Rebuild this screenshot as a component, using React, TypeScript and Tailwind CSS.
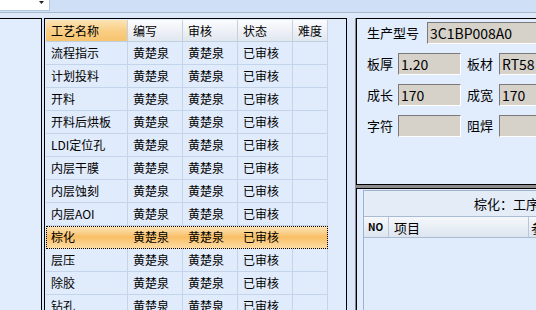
const rows = [
  "流程指示",
  "计划投料",
  "开料",
  "开料后烘板",
  "LDI定位孔",
  "内层干膜",
  "内层蚀刻",
  "内层AOI",
  "棕化",
  "层压",
  "除胶",
  "钻孔",
];

const cols = "grid w-[282px] grid-cols-[82px_55px_55px_55px_35px]";

function Field({ value, w }: { value?: string; w: string }) {
  return (
    <div
      className={`${w} h-[22px] shrink-0 border-t border-l border-t-[#7a7a7a] border-l-[#7a7a7a] border-r border-b border-r-white border-b-white bg-[#d6d2ca] pl-[2px] text-[14px] leading-[20px] text-black`}
    >
      {value}
    </div>
  );
}

export default function App() {
  return (
    <div className="flex h-[310px] w-[536px] flex-col overflow-hidden bg-[#dbe7f8] font-['Noto_Sans_CJK_SC',sans-serif] text-black">
      {/* toolbar */}
      <div className="flex h-[12px] shrink-0 bg-[#cfdff5]">
        <div className="relative h-[11px] w-[50px] border-r border-b border-[#b3c6dd] bg-white">
          <svg className="absolute right-[5px] top-[1px]" width="5" height="4" viewBox="0 0 5 4">
            <path d="M0 0h5L2.5 3z" fill="#222" />
          </svg>
        </div>
        <div className="flex-1" />
      </div>
      <div className="h-px shrink-0 bg-[#a9b9ce]" />
      <div className="h-[5px] shrink-0 bg-[#dde8f8]" />

      <div className="flex min-h-0 flex-1">
        {/* left panel */}
        <div className="w-[42px] shrink-0 border-t border-r border-black bg-[#e1ecfc]" />
        <div className="w-[2px] shrink-0" />

        {/* grid panel */}
        <div className="w-[303px] shrink-0 border-t border-l border-r border-black bg-[#e0ebfb] pt-px pl-px text-[12px]">
          <div className={`${cols} h-[22px] border-b border-[#c1cfe0]`}>
            {["工艺名称", "编写", "审核", "状态", "难度"].map((h, i) => (
              <div
                key={h}
                className={`flex items-center border-r border-[#c6d1de] pl-[5px] leading-none ${
                  i === 0
                    ? "bg-gradient-to-b from-[#fde4b4] via-[#f9cf86] to-[#f7c46e]"
                    : "bg-gradient-to-b from-[#fbfcfe] to-[#e1e7ef]"
                }`}
              >
                {h}
              </div>
            ))}
          </div>
          {rows.map((name) => {
            const sel = name === "棕化";
            return (
              <div
                key={name}
                className={`${cols} h-[23px] border-b ${
                  sel
                    ? "border-transparent bg-gradient-to-b from-[#fde6bd] via-[#f9bf64] to-[#fcdca4] outline-1 -outline-offset-1 outline-dotted outline-black"
                    : "border-[#c4d4ea]"
                }`}
              >
                {[name, "黄楚泉", "黄楚泉", "已审核", ""].map((c, i) => (
                  <div
                    key={i}
                    className={`flex items-center border-r pl-[5px] leading-none ${
                      sel ? "border-transparent" : "border-[#c4d4ea]"
                    }`}
                  >
                    {c}
                  </div>
                ))}
              </div>
            );
          })}
        </div>

        <div className="w-[8px] shrink-0" />

        {/* right column */}
        <div className="flex min-w-0 flex-1 flex-col border-l border-[#8a8a8a]">
          <div className="flex h-[167px] shrink-0 flex-col gap-[9px] border-t border-l border-b border-black bg-[#e1ecfc] pt-[3px] pl-[10px] text-[13px]">
            <div className="flex h-[22px] items-center gap-[5px]">
              <span className="w-[55px] shrink-0">生产型号</span>
              <Field value="3C1BP008A0" w="w-[130px]" />
            </div>
            {[
              ["板厚", "1.20", "板材", "RT58"],
              ["成长", "170", "成宽", "170"],
              ["字符", "", "阻焊", ""],
            ].map(([a, av, b, bv]) => (
              <div key={a} className="flex h-[22px] items-center">
                <span className="w-[31px] shrink-0">{a}</span>
                <Field value={av} w="w-[63px]" />
                <span className="ml-[6px] w-[32px] shrink-0">{b}</span>
                <Field value={bv} w="w-[60px]" />
              </div>
            ))}
          </div>
          <div className="h-[3px] shrink-0 bg-[#8d8d8d]" />
          <div className="flex min-h-0 flex-1 flex-col border-t border-l border-black bg-[#e1ecfc] pt-px pl-[6px]">
            <div className="flex flex-1 flex-col border-t border-l border-[#9fb3cc]">
              <div className="flex h-[25px] shrink-0 items-center whitespace-nowrap bg-[#e4ecf7] pl-[110px] text-[13px]">
                棕化：工序参数
              </div>
              <div className="flex h-[22px] shrink-0 border-t border-b border-[#a9bcd3] bg-gradient-to-b from-[#f5f8fc] to-[#dde5ef] text-[13px]">
                <div className="flex w-[25px] shrink-0 items-center border-r border-[#b8c6d8] pl-[4px] text-[10px] font-bold leading-none">
                  NO
                </div>
                <div className="flex w-[140px] shrink-0 items-center border-r border-[#b8c6d8] pl-[5px] leading-none">
                  项目
                </div>
                <div className="flex shrink-0 items-center pl-[2px] leading-none whitespace-nowrap">参数</div>
              </div>
              <div className="flex-1 bg-[#e0ebfb]" />
            </div>
          </div>
        </div>
      </div>
    </div>
  );
}
